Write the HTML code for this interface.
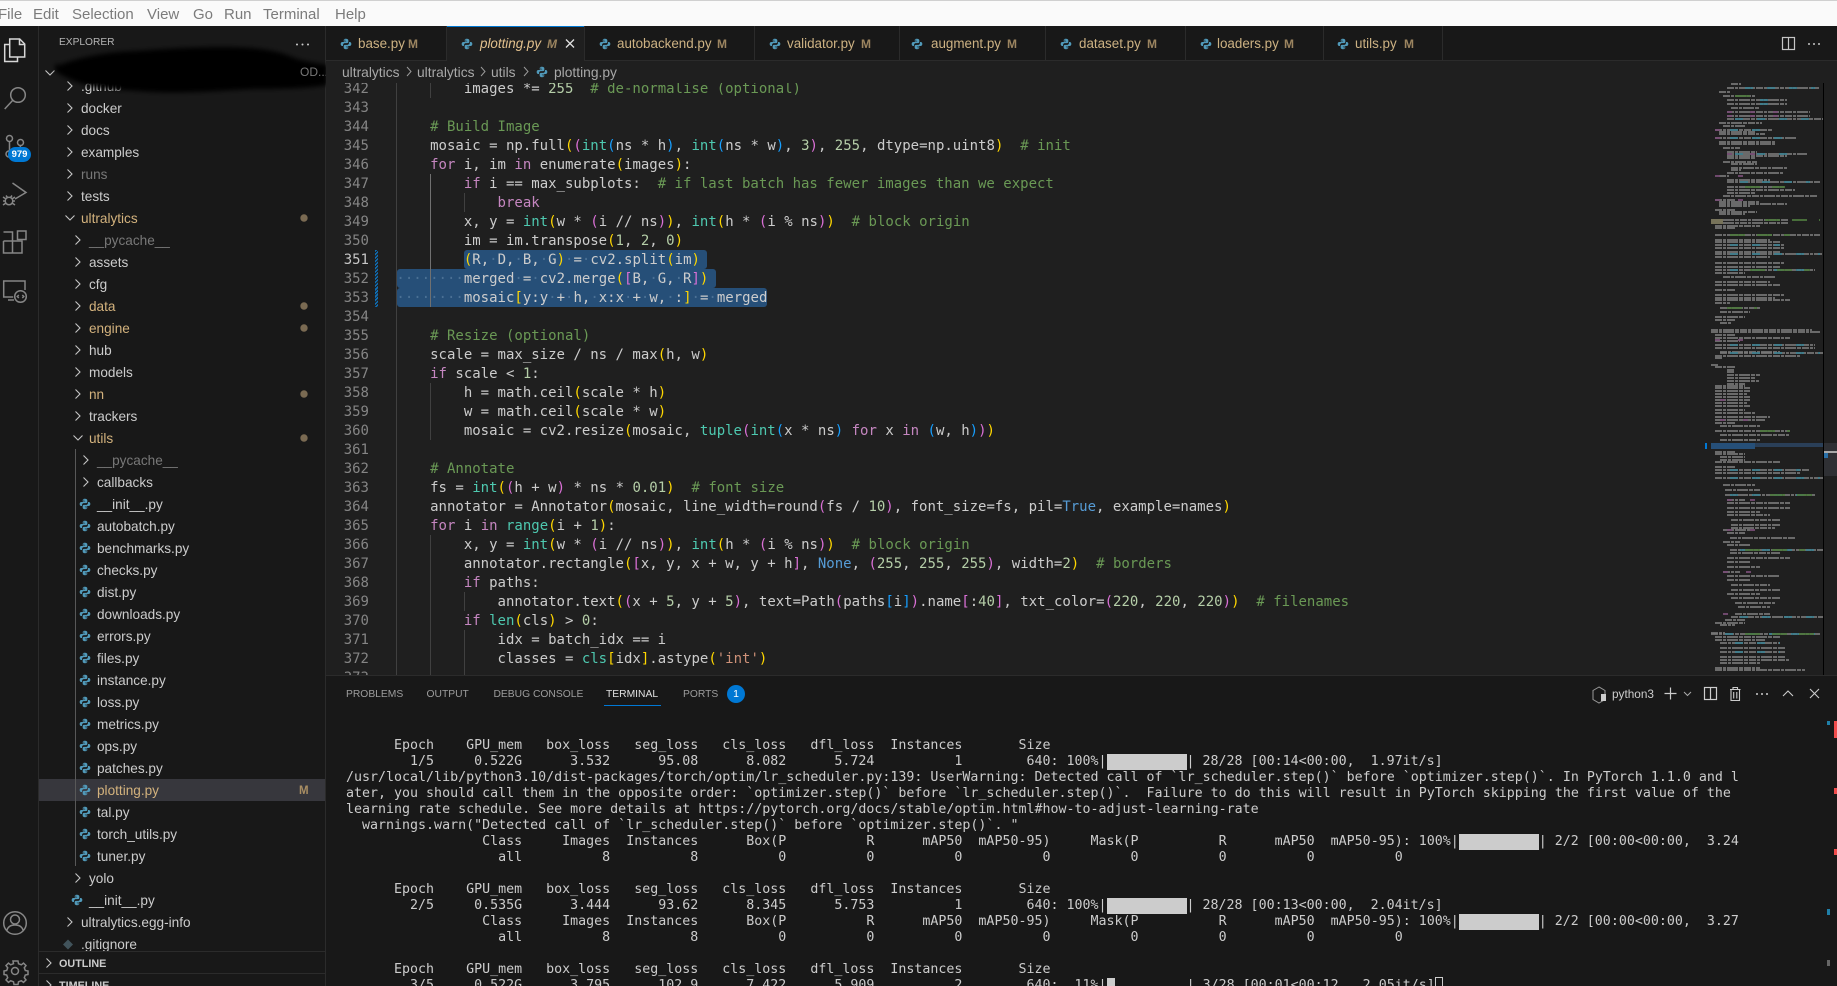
<!DOCTYPE html>
<html><head><meta charset="utf-8"><title>plotting.py</title>
<style>
html,body{margin:0;padding:0;background:#181818;width:1837px;height:986px;overflow:hidden}
body{position:relative;font-family:"Liberation Sans",sans-serif;color:#ccc}
.a{position:absolute;white-space:pre}
svg{position:absolute;overflow:visible}
#menu{position:absolute;left:0;top:0;width:1837px;height:26px;background:#fafafa;border-top:1px solid #d0d0d0;box-sizing:border-box}
#menu span{position:absolute;top:5px;font-size:15px;line-height:17px;color:#7b7b7b}
#tree div{position:absolute;height:22px;line-height:24px;font-size:13.6px;white-space:pre;color:#cccccc}
#tree .t{color:#d3b27d}
#tree .g{color:#787878}
.tab{position:absolute;top:26px;height:34px;line-height:35px;font-size:13.4px;color:#cdb283;white-space:pre}
.m{position:absolute;top:26px;height:34px;line-height:37px;font-size:12px;font-weight:bold;color:#9c8560}
#code,#nums{font-family:"DejaVu Sans Mono",monospace;font-size:14px;line-height:19px;white-space:pre;margin:0;position:absolute}
#nums{left:330px;width:39px;top:80px;text-align:right;color:#858585}
#code{left:396.4px;top:80px;color:#cccccc}
.k{color:#c586c0}.b{color:#4ec9b0}.c{color:#6a9955}.n{color:#b5cea8}.s{color:#ce9178}.y{color:#ffd700}.p{color:#da70d6}.u{color:#179fff}.v{color:#569cd6}.d{color:#4a7094}
.sel{position:absolute;background:#264f78;border-radius:3px}
.g1{position:absolute;width:1px;background:#404040}
.g2{position:absolute;width:1px;background:#707070}
#term{font-family:"DejaVu Sans Mono",monospace;font-size:13.3px;line-height:16px;white-space:pre;margin:0;position:absolute;left:346px;top:738px;color:#cccccc}
#term i{display:inline-block;height:16px;background:#ccc;vertical-align:top;font-style:normal}
.pt{position:absolute;top:687px;font-size:10.3px;line-height:16px;color:#9d9d9d;white-space:pre}
</style></head><body>
<svg width="0" height="0" style="position:absolute"><defs>
<symbol id="py" viewBox="0 0 16 16"><path fill="#519aba" d="M7.9 1C5.6 1 5 2 5 3.1V4.8h3.2v.6H3.1C1.8 5.4.9 6.4.9 8c0 1.7.9 2.7 2.1 2.7h1.1V9.1c0-1.3 1.1-2.3 2.4-2.3h2.9c1 0 1.7-.8 1.7-1.8V3.1C11.1 1.9 10 1 7.9 1zM6.5 2.2a.7.7 0 1 1 0 1.4.7.7 0 0 1 0-1.4z"/><path fill="#519aba" d="M8.1 15c2.3 0 2.9-1 2.9-2.1v-1.7H7.8v-.6h5.1c1.3 0 2.2-1 2.2-2.6 0-1.7-.9-2.7-2.1-2.7h-1.1v1.6c0 1.3-1.1 2.3-2.4 2.3H6.6c-1 0-1.7.8-1.7 1.8v1.9C4.9 14.1 6 15 8.1 15zm1.4-1.2a.7.7 0 1 1 0-1.4.7.7 0 0 1 0 1.4z"/></symbol>
<symbol id="cr" viewBox="0 0 10 12"><path d="M2.5 1.5 7 6l-4.5 4.5" fill="none" stroke="#c5c5c5" stroke-width="1.1"/></symbol>
<symbol id="cd" viewBox="0 0 12 10"><path d="M1.5 2.5 6 7l4.5-4.5" fill="none" stroke="#c5c5c5" stroke-width="1.1"/></symbol>
</defs></svg>

<div id="menu"><span style="left:-2px">File</span><span style="left:33px">Edit</span><span style="left:72px">Selection</span><span style="left:147px">View</span><span style="left:193px">Go</span><span style="left:224px">Run</span><span style="left:263px">Terminal</span><span style="left:335px">Help</span></div>

<!-- activity bar -->
<div class="a" style="left:38px;top:26px;width:1px;height:960px;background:#2b2b2b"></div>
<svg style="left:0;top:0" width="38" height="986" fill="none">
<g stroke="#d7d7d7" stroke-width="1.5"><path d="M9.7 39h10l5 5v13H9.7z"/><path d="M19.5 39v5.5h5.2"/><path d="M9.7 44.500H4.700V61.500h12.800V57"/></g>
<g stroke="#868686" stroke-width="1.5">
<circle cx="18" cy="95" r="7.300"/><path d="M12.800 100.300 4.700 109"/>
<circle cx="9.500" cy="138.500" r="3"/><circle cx="20.500" cy="142.500" r="3"/><path d="M9.500 141.500V152"/><path d="M20.500 145.500c0 4-4 5-7 6"/><circle cx="9" cy="154" r="3"/>
<path d="M12.500 183 26 192.500 15 199"/><circle cx="9" cy="201" r="3.800"/><path d="M3 197l3 2M15 197l-3 2M3 205l3-2M15 205l-3-2M3 201h2M13 201h2M6 195.500l1.500 2M12 195.500l-1.500 2"/>
<path d="M3.500 241h9v-9.500M3.500 241v12h18.500v-12h-9.500v12M12.500 241h-9M3.500 232h9v9"/><rect x="17.500" y="231" width="8.500" height="8.500"/>
<path d="M25 290v-9H3.700v16h9.500M8 300h6"/><circle cx="20.500" cy="296.500" r="5.800"/><path d="M18.800 295l-1.500 1.500 1.500 1.500M22.300 295l1.500 1.500-1.500 1.500"/>
<circle cx="15" cy="923" r="11.300"/><circle cx="15" cy="919.500" r="4.500"/><path d="M6.700 931c1-4.500 3.800-6 8.300-6s7.300 1.500 8.300 6"/>
<circle cx="15" cy="971" r="3.500"/><path d="M13 961l.5 2.700-2.800 1.100-2.200-1.700-2.500 2.500 1.700 2.200-1 2.700-2.700.5v3.500l2.700.5 1 2.700-1.700 2.200 2.500 2.500 2.200-1.700 2.800 1.100.5 2.700h4l.5-2.700 2.800-1.100 2.200 1.700 2.500-2.500-1.700-2.200 1-2.700 2.700-.5v-3.500l-2.700-.5-1-2.700 1.700-2.200-2.500-2.500-2.200 1.700-2.800-1.100-.5-2.700z"/>
</g></svg>
<div class="a" style="left:8px;top:146.500px;width:23px;height:15px;border-radius:8px;background:#0078d4;color:#fff;font-size:9.500px;font-weight:bold;line-height:15px;text-align:center">979</div>

<!-- sidebar -->
<div class="a" style="left:325px;top:26px;width:1px;height:960px;background:#2b2b2b"></div>
<div class="a" style="left:59px;top:35px;font-size:10.200px;line-height:16px;color:#b5b5b5">EXPLORER</div>
<svg style="left:295px;top:43px" width="16" height="4"><circle cx="2" cy="1.500" r="1" fill="#ccc"/><circle cx="7.500" cy="1.500" r="1" fill="#ccc"/><circle cx="13" cy="1.500" r="1" fill="#ccc"/></svg>
<svg style="left:44px;top:68px" width="12" height="10"><use href="#cd" width="12" height="10"/></svg>
<div id="tree">
<div style="left:81px;top:75px">.github</div>
<div style="left:81px;top:97px">docker</div><div style="left:81px;top:119px">docs</div><div style="left:81px;top:141px">examples</div><div class="g" style="left:81px;top:163px">runs</div><div style="left:81px;top:185px">tests</div><div class="t" style="left:81px;top:207px">ultralytics</div>
<div class="g" style="left:89px;top:229px">__pycache__</div><div style="left:89px;top:251px">assets</div><div style="left:89px;top:273px">cfg</div><div class="t" style="left:89px;top:295px">data</div><div class="t" style="left:89px;top:317px">engine</div><div style="left:89px;top:339px">hub</div><div style="left:89px;top:361px">models</div><div class="t" style="left:89px;top:383px">nn</div><div style="left:89px;top:405px">trackers</div><div class="t" style="left:89px;top:427px">utils</div>
<div class="g" style="left:97px;top:449px">__pycache__</div><div style="left:97px;top:471px">callbacks</div>
<div style="left:97px;top:493px">__init__.py</div><div style="left:97px;top:515px">autobatch.py</div><div style="left:97px;top:537px">benchmarks.py</div><div style="left:97px;top:559px">checks.py</div><div style="left:97px;top:581px">dist.py</div><div style="left:97px;top:603px">downloads.py</div><div style="left:97px;top:625px">errors.py</div><div style="left:97px;top:647px">files.py</div><div style="left:97px;top:669px">instance.py</div><div style="left:97px;top:691px">loss.py</div><div style="left:97px;top:713px">metrics.py</div><div style="left:97px;top:735px">ops.py</div><div style="left:97px;top:757px">patches.py</div>
<div style="left:39px;top:779px;width:286px;background:#37373d"></div>
<div class="t" style="left:97px;top:779px">plotting.py</div>
<div style="left:299px;top:779px;font-size:11.500px;font-weight:bold;color:#a98e63">M</div>
<div style="left:97px;top:801px">tal.py</div><div style="left:97px;top:823px">torch_utils.py</div><div style="left:97px;top:845px">tuner.py</div>
<div style="left:89px;top:867px">yolo</div><div style="left:89px;top:889px">__init__.py</div><div style="left:81px;top:911px">ultralytics.egg-info</div><div style="left:81px;top:933px">.gitignore</div>
</div>
<div class="a" style="left:75px;top:449px;width:1px;height:417px;background:#585858"></div>
<svg style="left:0;top:0" width="326" height="986">
<g>
<use href="#cr" x="65" y="80" width="10" height="12"/><use href="#cr" x="65" y="102" width="10" height="12"/><use href="#cr" x="65" y="124" width="10" height="12"/><use href="#cr" x="65" y="146" width="10" height="12"/><use href="#cr" x="65" y="168" width="10" height="12"/><use href="#cr" x="65" y="190" width="10" height="12"/><use href="#cd" x="64" y="213" width="12" height="10"/>
<use href="#cr" x="73" y="234" width="10" height="12"/><use href="#cr" x="73" y="256" width="10" height="12"/><use href="#cr" x="73" y="278" width="10" height="12"/><use href="#cr" x="73" y="300" width="10" height="12"/><use href="#cr" x="73" y="322" width="10" height="12"/><use href="#cr" x="73" y="344" width="10" height="12"/><use href="#cr" x="73" y="366" width="10" height="12"/><use href="#cr" x="73" y="388" width="10" height="12"/><use href="#cr" x="73" y="410" width="10" height="12"/><use href="#cd" x="72" y="433" width="12" height="10"/>
<use href="#cr" x="81" y="454" width="10" height="12"/><use href="#cr" x="81" y="476" width="10" height="12"/>
<use href="#cr" x="73" y="872" width="10" height="12"/><use href="#cr" x="65" y="916" width="10" height="12"/>
</g>
<g><use href="#py" x="79" y="498" width="12" height="12"/><use href="#py" x="79" y="520" width="12" height="12"/><use href="#py" x="79" y="542" width="12" height="12"/><use href="#py" x="79" y="564" width="12" height="12"/><use href="#py" x="79" y="586" width="12" height="12"/><use href="#py" x="79" y="608" width="12" height="12"/><use href="#py" x="79" y="630" width="12" height="12"/><use href="#py" x="79" y="652" width="12" height="12"/><use href="#py" x="79" y="674" width="12" height="12"/><use href="#py" x="79" y="696" width="12" height="12"/><use href="#py" x="79" y="718" width="12" height="12"/><use href="#py" x="79" y="740" width="12" height="12"/><use href="#py" x="79" y="762" width="12" height="12"/><use href="#py" x="79" y="784" width="12" height="12"/><use href="#py" x="79" y="806" width="12" height="12"/><use href="#py" x="79" y="828" width="12" height="12"/><use href="#py" x="79" y="850" width="12" height="12"/><use href="#py" x="71" y="894" width="12" height="12"/></g>
<path d="M68 939.500l5 5-5 5-5-5z" fill="#41535b"/>
<g fill="#7a6a52"><circle cx="304" cy="218" r="3.700"/><circle cx="304" cy="306" r="3.700"/><circle cx="304" cy="328" r="3.700"/><circle cx="304" cy="394" r="3.700"/><circle cx="304" cy="438" r="3.700"/></g>
</svg>
<div class="a" style="left:39px;top:951px;width:286px;height:1px;background:#2b2b2b"></div>
<div class="a" style="left:39px;top:973px;width:286px;height:1px;background:#2b2b2b"></div>
<div class="a" style="left:59px;top:956px;font-size:10.800px;font-weight:bold;line-height:16px;color:#ccc">OUTLINE</div>
<div class="a" style="left:59px;top:978px;font-size:10.800px;font-weight:bold;line-height:16px;color:#ccc">TIMELINE</div>
<svg style="left:0;top:0" width="60" height="986"><use href="#cr" x="44" y="957" width="10" height="12"/><use href="#cr" x="44" y="979" width="10" height="12"/></svg>
<!-- scribble -->
<svg style="left:0;top:0" width="340" height="100"><defs><filter id="bl" x="-10%" y="-40%" width="120%" height="180%"><feGaussianBlur stdDeviation="2.500"/></filter><clipPath id="sc"><rect x="40" y="30" width="286" height="80"/></clipPath></defs>
<g clip-path="url(#sc)"><path filter="url(#bl)" fill="#000" d="M58 66C70 60 100 52 135 51c30-2 55-4 85-4 30 0 55 2 72 10 12 5 25 6 35 8v20c-15 3-40 4-70 4-30 1-70 5-105 3-30-2-60-3-80-12-14-6-22-10-14-18z"/></g></svg>
<div class="a" style="left:300px;top:64px;font-size:12px;line-height:16px;color:#777">OD...</div>

<!-- editor -->
<div class="a" style="left:326px;top:26px;width:1511px;height:650px;background:#1f1f1f"></div>
<div class="a" style="left:326px;top:26px;width:1511px;height:35px;background:#181818"></div>
<div class="a" style="left:326px;top:60px;width:1511px;height:1px;background:#2b2b2b"></div>
<!-- tabs -->
<div class="a" style="left:447px;top:26px;width:137px;height:35px;background:#1f1f1f;box-sizing:border-box;border-top:1px solid #0078d4"></div>
<div class="a" style="left:446px;top:26px;width:1px;height:35px;background:#2b2b2b"></div>
<div class="a" style="left:584px;top:26px;width:1px;height:35px;background:#2b2b2b"></div>
<div class="a" style="left:754px;top:26px;width:1px;height:35px;background:#2b2b2b"></div>
<div class="a" style="left:899px;top:26px;width:1px;height:35px;background:#2b2b2b"></div>
<div class="a" style="left:1045px;top:26px;width:1px;height:35px;background:#2b2b2b"></div>
<div class="a" style="left:1185px;top:26px;width:1px;height:35px;background:#2b2b2b"></div>
<div class="a" style="left:1323px;top:26px;width:1px;height:35px;background:#2b2b2b"></div>
<div class="a" style="left:1442px;top:26px;width:1px;height:35px;background:#2b2b2b"></div>
<div class="tab" style="left:358px">base.py</div><div class="m" style="left:408px">M</div>
<div class="tab" style="left:480px;font-style:italic;color:#e2c08d">plotting.py</div><div class="m" style="left:547px;font-style:italic">M</div>
<div class="tab" style="left:617px">autobackend.py</div><div class="m" style="left:717px">M</div>
<div class="tab" style="left:787px">validator.py</div><div class="m" style="left:861px">M</div>
<div class="tab" style="left:931px">augment.py</div><div class="m" style="left:1007px">M</div>
<div class="tab" style="left:1079px">dataset.py</div><div class="m" style="left:1147px">M</div>
<div class="tab" style="left:1217px">loaders.py</div><div class="m" style="left:1284px">M</div>
<div class="tab" style="left:1355px">utils.py</div><div class="m" style="left:1404px">M</div>
<svg style="left:0;top:0" width="1837" height="100" fill="none">
<use href="#py" x="340" y="38" width="12" height="12"/><use href="#py" x="461" y="38" width="12" height="12"/><use href="#py" x="599" y="38" width="12" height="12"/><use href="#py" x="769" y="38" width="12" height="12"/><use href="#py" x="911" y="38" width="12" height="12"/><use href="#py" x="1060" y="38" width="12" height="12"/><use href="#py" x="1200" y="38" width="12" height="12"/><use href="#py" x="1337" y="38" width="12" height="12"/>
<use href="#py" x="536" y="66" width="12" height="12"/>
<path d="M566 39.500l8 8M574 39.500l-8 8" stroke="#e0e0e0" stroke-width="1.300"/>
<rect x="1782.500" y="37.500" width="12" height="12" stroke="#c5c5c5" stroke-width="1.200"/><path d="M1788.500 37.500v12" stroke="#c5c5c5" stroke-width="1.200"/>
<g fill="#c5c5c5"><circle cx="1809" cy="44" r="1"/><circle cx="1814" cy="44" r="1"/><circle cx="1819" cy="44" r="1"/></g>
<g stroke="#9a9a9a" stroke-width="1"><path d="M407 67l4 4.500-4 4.500M481 67l4 4.500-4 4.500M524 67l4 4.500-4 4.500"/></g>
</svg>
<div class="a" style="left:342px;top:64px;font-size:13.800px;line-height:17px;color:#a8a8a8">ultralytics</div>
<div class="a" style="left:417px;top:64px;font-size:13.800px;line-height:17px;color:#a8a8a8">ultralytics</div>
<div class="a" style="left:491px;top:64px;font-size:13.800px;line-height:17px;color:#a8a8a8">utils</div>
<div class="a" style="left:554px;top:64px;font-size:13.800px;line-height:17px;color:#a8a8a8">plotting.py</div>

<div class="a" style="left:326px;top:83px;width:1511px;height:592px;overflow:hidden" id="ed">
<div style="position:absolute;left:-326px;top:-83px;width:1837px;height:760px">
<div class="sel" style="left:463.500px;top:250px;width:243.500px;height:19px"></div>
<div class="sel" style="left:396.500px;top:269px;width:319.500px;height:19px"></div>
<div class="sel" style="left:396.500px;top:288px;width:370.500px;height:19px"></div>
<div class="g1" style="left:396px;top:79px;height:600px"></div>
<div class="g1" style="left:430px;top:79px;height:19px"></div>
<div class="g2" style="left:430px;top:174px;height:133px"></div>
<div class="g1" style="left:464px;top:193px;height:19px"></div>
<div class="g1" style="left:430px;top:383px;height:57px"></div>
<div class="g1" style="left:430px;top:535px;height:140px"></div>
<div class="g1" style="left:464px;top:592px;height:19px"></div>
<div class="g1" style="left:464px;top:630px;height:45px"></div>
<div style="position:absolute;left:375px;top:250px;width:3px;height:57px;background:repeating-linear-gradient(135deg,#0d6fb8 0,#0d6fb8 1.500px,#1f1f1f 1.500px,#1f1f1f 2.500px)"></div>
<pre id="nums">342
343
344
345
346
347
348
349
350
<span style="color:#c6c6c6">351</span>
352
353
354
355
356
357
358
359
360
361
362
363
364
365
366
367
368
369
370
371
372
373</pre>
<pre id="code">        images *= <span class="n">255</span>  <span class="c"># de-normalise (optional)</span>

    <span class="c"># Build Image</span>
    mosaic = np.full<span class="y">(</span><span class="p">(</span><span class="b">int</span><span class="u">(</span>ns * h<span class="u">)</span>, <span class="b">int</span><span class="u">(</span>ns * w<span class="u">)</span>, <span class="n">3</span><span class="p">)</span>, <span class="n">255</span>, dtype=np.uint8<span class="y">)</span>  <span class="c"># init</span>
    <span class="k">for</span> i, im <span class="k">in</span> enumerate<span class="y">(</span>images<span class="y">)</span>:
        <span class="k">if</span> i == max_subplots:  <span class="c"># if last batch has fewer images than we expect</span>
            <span class="k">break</span>
        x, y = <span class="b">int</span><span class="y">(</span>w * <span class="p">(</span>i // ns<span class="p">)</span><span class="y">)</span>, <span class="b">int</span><span class="y">(</span>h * <span class="p">(</span>i % ns<span class="p">)</span><span class="y">)</span>  <span class="c"># block origin</span>
        im = im.transpose<span class="y">(</span><span class="n">1</span>, <span class="n">2</span>, <span class="n">0</span><span class="y">)</span>
        <span class="y">(</span>R,<span class="d">·</span>D,<span class="d">·</span>B,<span class="d">·</span>G<span class="y">)</span><span class="d">·</span>=<span class="d">·</span>cv2.split<span class="y">(</span>im<span class="y">)</span>
<span class="d">········</span>merged<span class="d">·</span>=<span class="d">·</span>cv2.merge<span class="y">(</span><span class="p">[</span>B,<span class="d">·</span>G,<span class="d">·</span>R<span class="p">]</span><span class="y">)</span>
<span class="d">········</span>mosaic<span class="y">[</span>y:y<span class="d">·</span>+<span class="d">·</span>h,<span class="d">·</span>x:x<span class="d">·</span>+<span class="d">·</span>w,<span class="d">·</span>:<span class="y">]</span><span class="d">·</span>=<span class="d">·</span>merged

    <span class="c"># Resize (optional)</span>
    scale = max_size / ns / max<span class="y">(</span>h, w<span class="y">)</span>
    <span class="k">if</span> scale &lt; <span class="n">1</span>:
        h = math.ceil<span class="y">(</span>scale * h<span class="y">)</span>
        w = math.ceil<span class="y">(</span>scale * w<span class="y">)</span>
        mosaic = cv2.resize<span class="y">(</span>mosaic, <span class="b">tuple</span><span class="p">(</span><span class="b">int</span><span class="u">(</span>x * ns<span class="u">)</span> <span class="k">for</span> x <span class="k">in</span> <span class="u">(</span>w, h<span class="u">)</span><span class="p">)</span><span class="y">)</span>

    <span class="c"># Annotate</span>
    fs = <span class="b">int</span><span class="y">(</span><span class="p">(</span>h + w<span class="p">)</span> * ns * <span class="n">0.01</span><span class="y">)</span>  <span class="c"># font size</span>
    annotator = Annotator<span class="y">(</span>mosaic, line_width=round<span class="p">(</span>fs / <span class="n">10</span><span class="p">)</span>, font_size=fs, pil=<span class="v">True</span>, example=names<span class="y">)</span>
    <span class="k">for</span> i <span class="k">in</span> <span class="b">range</span><span class="y">(</span>i + <span class="n">1</span><span class="y">)</span>:
        x, y = <span class="b">int</span><span class="y">(</span>w * <span class="p">(</span>i // ns<span class="p">)</span><span class="y">)</span>, <span class="b">int</span><span class="y">(</span>h * <span class="p">(</span>i % ns<span class="p">)</span><span class="y">)</span>  <span class="c"># block origin</span>
        annotator.rectangle<span class="y">(</span><span class="p">[</span>x, y, x + w, y + h<span class="p">]</span>, <span class="v">None</span>, <span class="p">(</span><span class="n">255</span>, <span class="n">255</span>, <span class="n">255</span><span class="p">)</span>, width=<span class="n">2</span><span class="y">)</span>  <span class="c"># borders</span>
        <span class="k">if</span> paths:
            annotator.text<span class="y">(</span><span class="p">(</span>x + <span class="n">5</span>, y + <span class="n">5</span><span class="p">)</span>, text=Path<span class="p">(</span>paths<span class="u">[</span>i<span class="u">]</span><span class="p">)</span>.name<span class="p">[</span>:<span class="n">40</span><span class="p">]</span>, txt_color=<span class="p">(</span><span class="n">220</span>, <span class="n">220</span>, <span class="n">220</span><span class="p">)</span><span class="y">)</span>  <span class="c"># filenames</span>
        <span class="k">if</span> <span class="b">len</span><span class="y">(</span>cls<span class="y">)</span> &gt; <span class="n">0</span>:
            idx = batch_idx == i
            classes = <span class="b">cls</span><span class="y">[</span>idx<span class="y">]</span>.astype<span class="y">(</span><span class="s">'int'</span><span class="y">)</span></pre>
</div></div>

<!-- minimap -->
<svg style="left:0;top:0" width="1837" height="700" fill="none">
<rect x="1711" y="443" width="112" height="4" fill="#2a3f58"/><rect x="1711" y="443" width="44" height="6" fill="#264f78"/><rect x="1705" y="443" width="2" height="6" fill="#0078d4"/>
<path stroke="#757575" stroke-width="1.800" stroke-dasharray="7 1 3 1 11 1 4 1" d="M1731 84h10M1727 88h92M1719 92h12M1723 96h32M1727 100h60M1727 104h60M1731 108h28M1727 112h83M1727 116h83M1727 119h96M1719 123h43M1723 126h22M1715 130h57M1719 132h36M1719 134h46M1715 138h82M1719 142h56M1719 144h56M1723 148h17M1727 152h30M1727 154h80M1727 156h60M1727 158h28M1723 162h34M1731 164h26M1731 168h56M1731 170h10M1727 173h56M1719 176h10M1727 180h43M1727 182h93M1727 187h58M1727 190h68M1727 193h28M1723 196h94M1715 200h20M1719 202h41M1719 204h68M1719 206h31M1715 210h20M1719 212h38M1719 214h26M1711 220h77M1711 223h77M1715 226h45M1715 228h20M1715 235h105M1715 240h55M1715 242h65M1715 245h70M1715 248h70M1715 252h65M1715 254h107M1715 257h55M1715 263h70M1715 267h65M1715 270h100M1715 273h30M1723 277h52M1715 282h55M1715 285h65M1715 290h20M1715 295h70M1715 298h60M1715 300h75M1715 303h15M1720 308h40M1720 312h30M1715 317h30M1715 320h20M1720 323h12M1711 330h101M1711 332h109M1715 335h20M1715 338h75M1715 341h25M1715 345h100M1715 348h100M1720 352h60M1720 353h103M1715 356h85M1715 358h7M1711 365h7M1715 367h20M1727 370h8M1727 372h8M1727 375h33M1727 378h28M1727 381h32M1727 384h18M1715 386h30M1715 388h35M1715 391h35M1715 394h32M1715 397h35M1715 400h35M1715 403h32M1715 406h35M1715 410h30M1715 413h40M1715 417h55M1715 420h50M1715 423h20M1720 426h40M1715 431h75M1720 435h70M1720 440h40M1715 452h20M1715 454h30M1720 457h25M1720 460h25M1715 462h65M1715 467h20M1715 470h95M1715 473h85M1715 478h108M1723 485h32M1725 490h35M1725 495h90M1727 500h18M1727 503h63M1727 508h63M1727 512h33M1727 515h43M1731 520h49M1731 525h49M1731 528h44M1723 530h27M1727 533h18M1730 538h65M1723 542h17M1727 545h23M1730 550h93M1730 553h50M1727 558h63M1727 562h23M1727 567h33M1723 572h17M1727 576h53M1727 580h23M1731 585h39M1731 590h49M1727 594h33M1731 598h49M1735 603h40M1738 607h32M1735 614h35M1731 617h92M1725 620h20M1715 623h30M1720 625h15M1711 633h14M1711 634h109M1715 637h65M1715 640h50M1720 643h60M1720 648h65M1720 652h65M1720 657h65M1720 660h70M1720 663h40M1715 668h45M1715 670h90"/>
<path stroke="#3f8090" stroke-width="1.800" stroke-dasharray="8 14" d="M1745 88h70M1760 100h20M1760 104h20M1735 119h80M1735 154h60M1740 182h70M1730 254h90M1730 270h80M1730 353h90M1730 470h70M1730 478h90M1740 550h80M1740 617h80M1725 634h90M1730 130h40M1730 138h60M1730 245h50M1730 345h80M1730 495h80M1735 643h45M1735 652h45"/>
<path stroke="#7a4f78" stroke-width="1.800" stroke-dasharray="5 18" d="M1727 112h60M1727 116h60M1715 176h30M1715 200h40M1715 340h30M1720 400h20M1720 420h40M1727 500h30M1727 530h40M1723 572h30M1723 614h20M1727 154h30M1715 130h10M1715 138h10"/>
<path stroke="#4e7a3f" stroke-width="1.800" stroke-dasharray="15 12" d="M1765 220h55M1730 235h60M1750 270h60M1727 308h30M1760 431h30M1770 495h45M1745 550h60M1735 96h20M1745 187h40M1745 634h70"/>
<rect x="1711" y="219" width="12" height="5" fill="#77735a"/>
<rect x="1823" y="83" width="1" height="592" fill="#000"/>
<rect x="1824" y="443" width="13" height="33" fill="#2f3034"/>
<rect x="1824" y="451" width="13" height="2" fill="#a8a8a8"/>
<rect x="1824" y="453" width="4" height="5" fill="#2a70a8"/>
</svg>

<!-- panel -->
<div class="a" style="left:326px;top:675px;width:1511px;height:311px;background:#181818;border-top:1px solid #2b2b2b;box-sizing:border-box"></div>
<div class="pt" style="left:346px">PROBLEMS</div><div class="pt" style="left:426.500px">OUTPUT</div><div class="pt" style="left:493.500px">DEBUG CONSOLE</div><div class="pt" style="left:606px;color:#e0e0e0">TERMINAL</div><div class="pt" style="left:683px">PORTS</div>
<div class="a" style="left:604px;top:705px;width:57px;height:1px;background:#0078d4"></div>
<div class="a" style="left:727px;top:685px;width:18px;height:18px;border-radius:9px;background:#0078d4;color:#fff;font-size:10.500px;line-height:18px;text-align:center">1</div>
<div class="a" style="left:1612px;top:686px;font-size:11.800px;line-height:16px;color:#ccc">python3</div>
<svg style="left:0;top:670px" width="1837" height="316" fill="none">
<path d="M1599 17l-6 3.500v9l6 3.500 6-3.500v-9z" stroke="#9a9a9a"/><rect x="1601" y="24" width="5" height="7" fill="#ccc"/>
<path d="M1664.500 23.500h12M1670.500 17.500v12" stroke="#ccc" stroke-width="1.200"/><path d="M1684 22l3.500 3.500L1691 22" stroke="#aaa"/>
<rect x="1704.500" y="17.500" width="12" height="12" stroke="#ccc" stroke-width="1.200"/><path d="M1710.500 17.500v12" stroke="#ccc" stroke-width="1.200"/>
<path d="M1730 19.500h10.500M1733 19.500v-2h4.500v2M1731 19.500v11h8.500v-11M1733.700 22v6.500M1736.800 22v6.500" stroke="#ccc" stroke-width="1.100"/>
<g fill="#ccc"><circle cx="1757" cy="24" r="1"/><circle cx="1762" cy="24" r="1"/><circle cx="1767" cy="24" r="1"/></g>
<path d="M1783 26l5-5 5 5M1810 19l9 9M1819 19l-9 9" stroke="#ccc" stroke-width="1.100"/>
<rect x="1827" y="51" width="3" height="4" fill="#1f7fa8"/><rect x="1834" y="51" width="3" height="17" fill="#f14c4c"/><rect x="1834" y="118" width="3" height="6" fill="#f14c4c"/><rect x="1834" y="179" width="3" height="6" fill="#f14c4c"/><rect x="1827" y="239" width="3" height="6" fill="#1f7fa8"/><rect x="1827" y="290" width="3" height="6" fill="#666"/>
<rect x="1435.500" y="307.500" width="7" height="14" stroke="#ccc"/>
</svg>
<pre id="term">      Epoch    GPU_mem   box_loss   seg_loss   cls_loss   dfl_loss  Instances       Size
        1/5     0.522G      3.532      95.08      8.082      5.724          1        640: 100%|<i style="width:80px"></i>| 28/28 [00:14&lt;00:00,  1.97it/s]
/usr/local/lib/python3.10/dist-packages/torch/optim/lr_scheduler.py:139: UserWarning: Detected call of `lr_scheduler.step()` before `optimizer.step()`. In PyTorch 1.1.0 and l
ater, you should call them in the opposite order: `optimizer.step()` before `lr_scheduler.step()`.  Failure to do this will result in PyTorch skipping the first value of the
learning rate schedule. See more details at https://pytorch.org/docs/stable/optim.html#how-to-adjust-learning-rate
  warnings.warn("Detected call of `lr_scheduler.step()` before `optimizer.step()`. "
                 Class     Images  Instances      Box(P          R      mAP50  mAP50-95)     Mask(P          R      mAP50  mAP50-95): 100%|<i style="width:80px"></i>| 2/2 [00:00&lt;00:00,  3.24
                   all          8          8          0          0          0          0          0          0          0          0

      Epoch    GPU_mem   box_loss   seg_loss   cls_loss   dfl_loss  Instances       Size
        2/5     0.535G      3.444      93.62      8.345      5.753          1        640: 100%|<i style="width:80px"></i>| 28/28 [00:13&lt;00:00,  2.04it/s]
                 Class     Images  Instances      Box(P          R      mAP50  mAP50-95)     Mask(P          R      mAP50  mAP50-95): 100%|<i style="width:80px"></i>| 2/2 [00:00&lt;00:00,  3.27
                   all          8          8          0          0          0          0          0          0          0          0

      Epoch    GPU_mem   box_loss   seg_loss   cls_loss   dfl_loss  Instances       Size
        3/5     0.522G      3.795      102.9      7.422      5.909          2        640:  11%|<i style="width:8px"></i>         | 3/28 [00:01&lt;00:12,  2.05it/s]</pre>
</body></html>
